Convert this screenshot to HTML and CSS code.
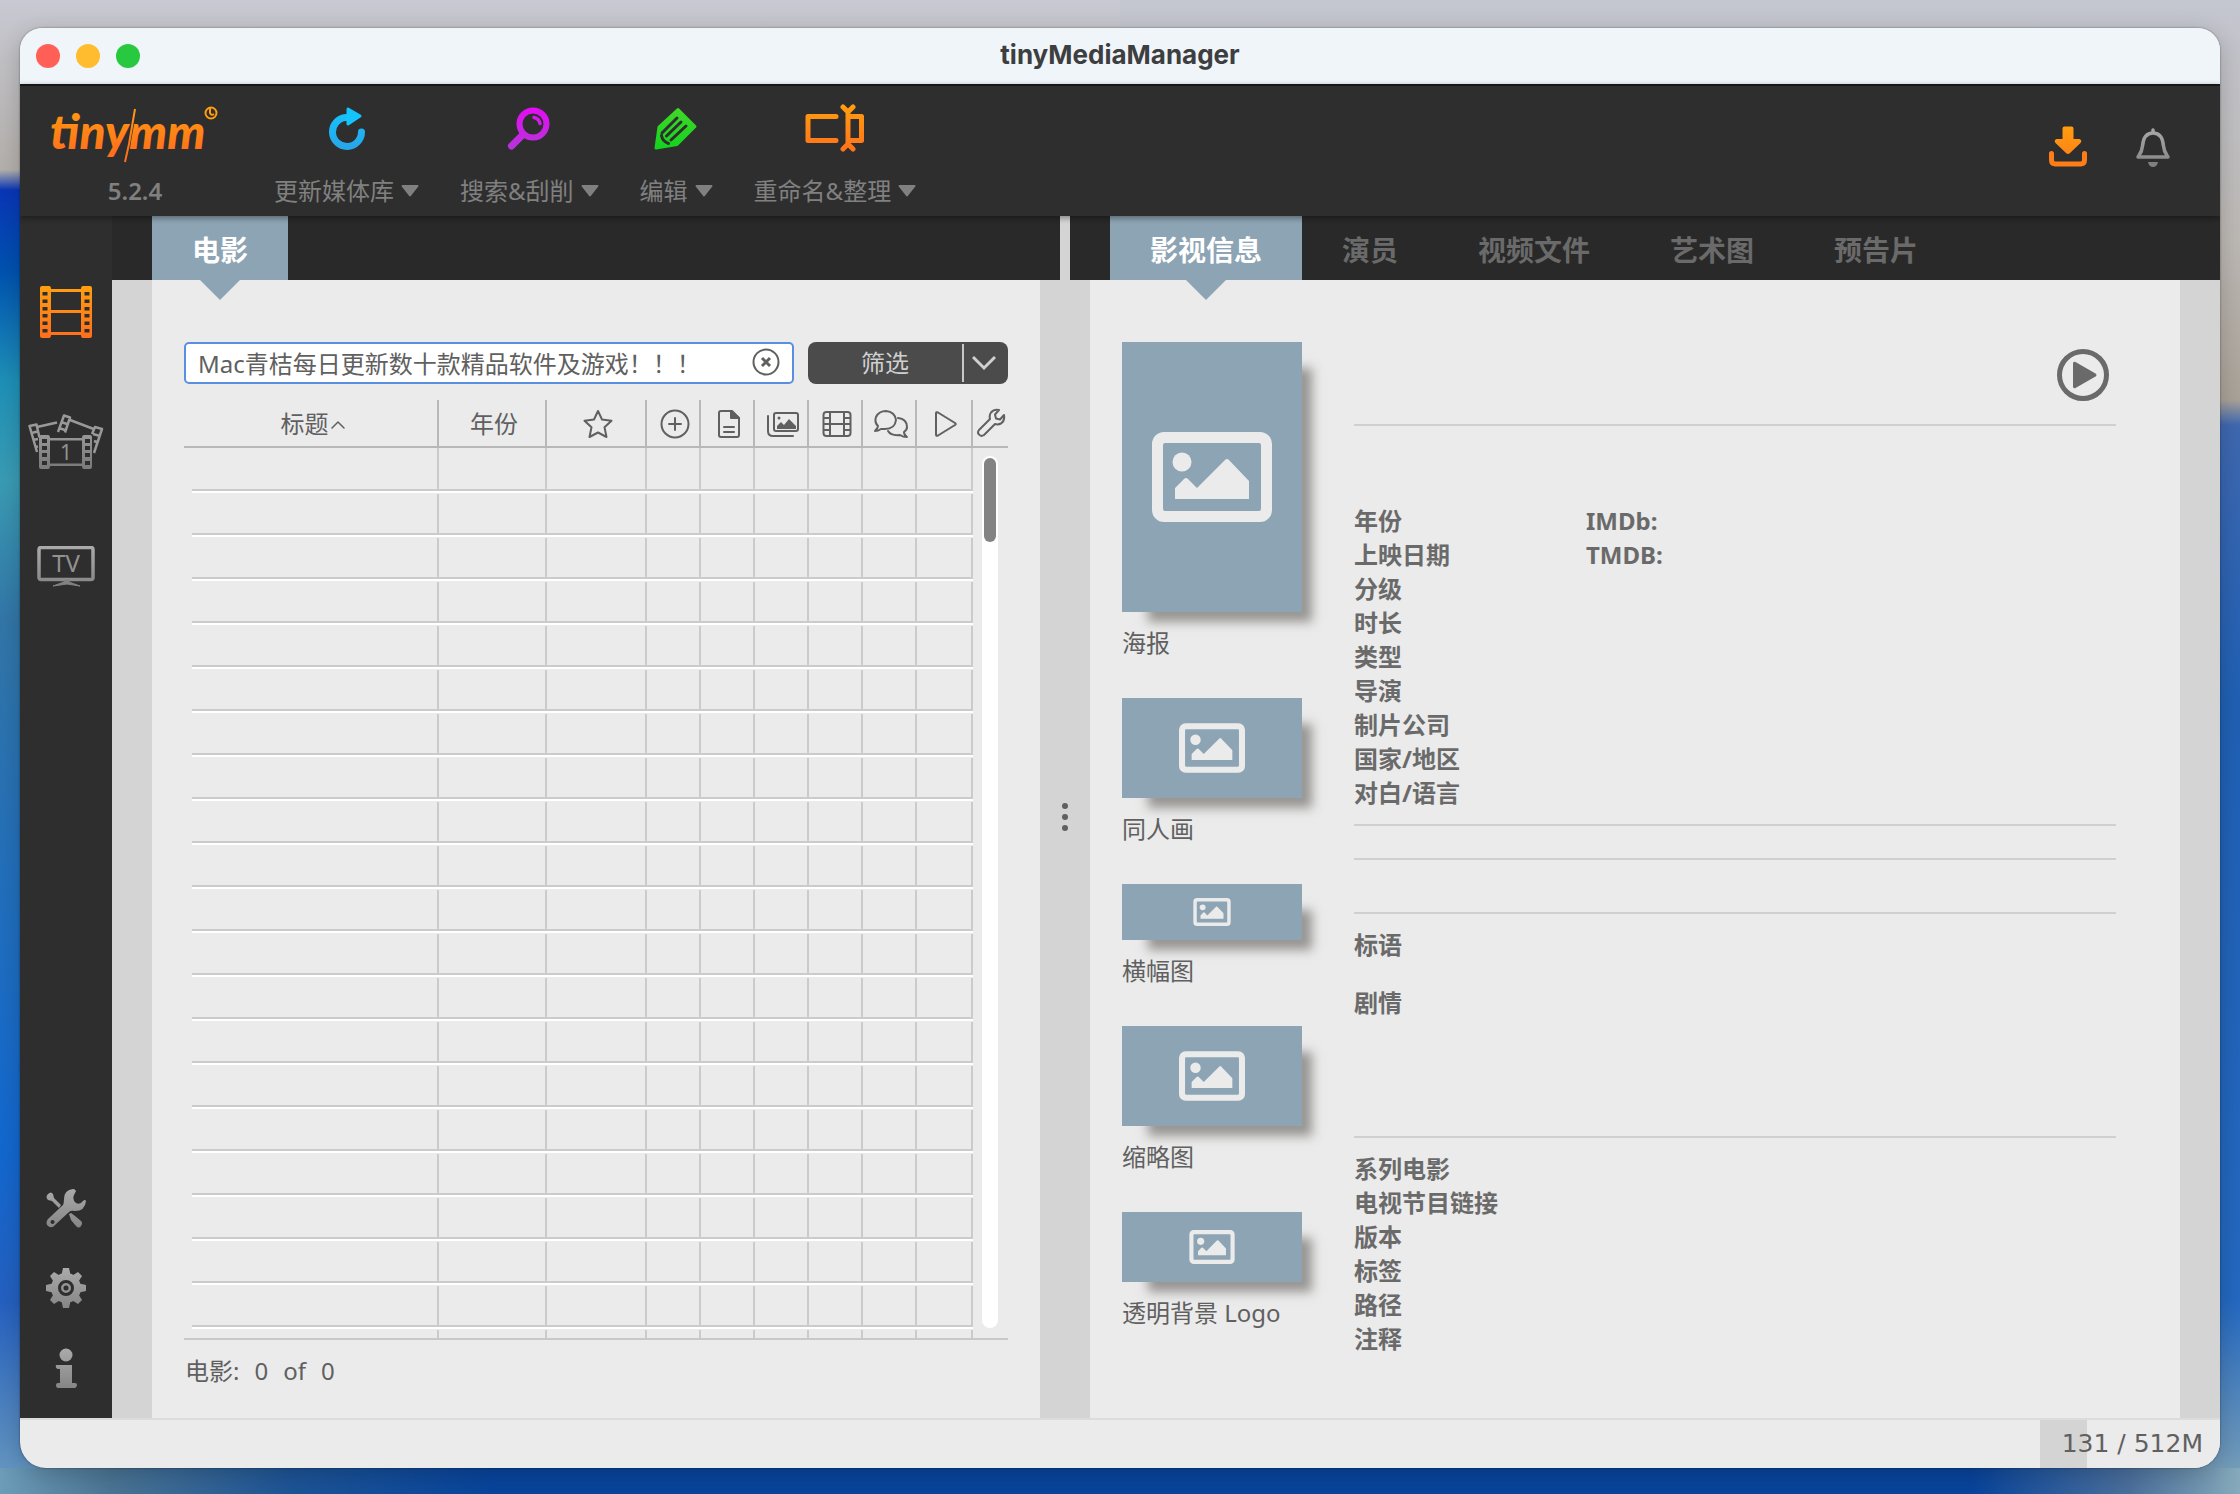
FILE: index.html
```html
<!DOCTYPE html>
<html lang="zh-CN">
<head>
  <meta charset="UTF-8" />
  <meta name="viewport" content="width=device-width, initial-scale=1.0"/>
  <title>tinyMediaManager</title>
  <link rel="stylesheet" href="styles.css">
</head>
<body>

  <!-- shared gradients and symbols -->
  <svg class="defs" width="0" height="0" aria-hidden="true">
    <defs>
      <linearGradient id="orange" gradientUnits="userSpaceOnUse" x1="0" y1="0" x2="0" y2="50"><stop offset="0" stop-color="#ff9f0f"/><stop offset="1" stop-color="#ff6f1c"/></linearGradient>
      <linearGradient id="blue" gradientUnits="userSpaceOnUse" x1="0" y1="0" x2="0" y2="44"><stop offset="0" stop-color="#12c8ff"/><stop offset="1" stop-color="#28a4e8"/></linearGradient>
      <linearGradient id="purple" gradientUnits="userSpaceOnUse" x1="0" y1="0" x2="0" y2="44"><stop offset="0" stop-color="#e60af5"/><stop offset="1" stop-color="#b436d8"/></linearGradient>
      <linearGradient id="green" gradientUnits="userSpaceOnUse" x1="0" y1="0" x2="0" y2="44"><stop offset="0" stop-color="#46d62c"/><stop offset="1" stop-color="#10d41c"/></linearGradient>
      <linearGradient id="grey" gradientUnits="userSpaceOnUse" x1="0" y1="0" x2="0" y2="50"><stop offset="0" stop-color="#ababab"/><stop offset="1" stop-color="#7c7c7c"/></linearGradient>
    </defs>
    <symbol id="caret" viewBox="0 0 18 12"><path d="M1.5 1h15L9 10.500z" fill="#808080" stroke="#808080" stroke-width="2" stroke-linejoin="round"/></symbol>
    <symbol id="picture" viewBox="0 0 120 90">
      <path fill="#ebebeb" fill-rule="evenodd" d="M12 0h96a12 12 0 0 1 12 12v66a12 12 0 0 1-12 12H12A12 12 0 0 1 0 78V12A12 12 0 0 1 12 0zM13 11a2 2 0 0 0-2 2v64a2 2 0 0 0 2 2h94a2 2 0 0 0 2-2V13a2 2 0 0 0-2-2z"/>
      <circle cx="30" cy="30" r="9.500" fill="#ebebeb"/>
      <path fill="#ebebeb" d="M23 67V56l9-9q2-2 4 0l9 9 28-28q2-2 4 0l20 21v18z"/>
    </symbol>
  </svg>

  <div class="window">
    <div class="titlebar">
      <div class="lights">
        <button class="light red" aria-label="关闭"></button>
        <button class="light yellow" aria-label="最小化"></button>
        <button class="light green" aria-label="缩放"></button>
      </div>
      <h1>tinyMediaManager</h1>
    </div>

    <header class="toolbar">
      <div class="brand">
        <svg width="174" height="68" viewBox="-2 -8 174 68">
          <text class="logo-text" x="0" y="45" fill="url(#orange)">tiny</text>
          <text class="logo-text" x="79" y="45" fill="url(#orange)">mm</text>
          <path d="M85 5L75 58" stroke="#2e2e2e" stroke-width="4"/>
          <path d="M85 5L79 40L75 58" stroke="url(#orange)" stroke-width="2" fill="none"/>
          <circle cx="161" cy="9" r="5.500" fill="none" stroke="#ff9f0f" stroke-width="2"/>
          <path d="M160 4v5q1 3 4 1" fill="none" stroke="#ff9f0f" stroke-width="2"/>
        </svg>
        <span>5.2.4</span>
      </div>

      <nav class="actions">
        <button class="action">
          <svg width="40" height="44" viewBox="0 0 40 44"><path d="M19 11.500A14.500 14.500 0 1 0 34.500 26" fill="none" stroke="url(#blue)" stroke-width="7" stroke-linecap="round"/><path d="M21 3l12 7-12 8z" fill="#14c4fd" stroke="#14c4fd" stroke-width="3" stroke-linejoin="round"/></svg>
          <span>更新媒体库<svg width="18" height="12"><use href="#caret"/></svg></span>
        </button>
        <button class="action">
          <svg width="44" height="44" viewBox="0 0 44 44" fill="none" stroke="url(#purple)" stroke-linecap="round"><circle cx="26" cy="18" r="13.500" stroke-width="6"/><path d="M15 29.500L4.500 40" stroke-width="7"/><path d="M27 11.500q5 1 6 6" stroke-width="3.500"/></svg>
          <span>搜索&amp;刮削<svg width="18" height="12"><use href="#caret"/></svg></span>
        </button>
        <button class="action">
          <svg width="44" height="44" viewBox="0 0 44 44" stroke-linejoin="round" stroke-linecap="round"><path d="M2 42L5 21 24 3.500 41 20.500 23 38.500z" fill="url(#green)" stroke="url(#green)" stroke-width="3"/><path d="M8 27L23 12M12.500 30L27 16M17 34L32 20" fill="none" stroke="#2e2e2e" stroke-width="3"/><path d="M7.500 29.500q1 6 7 8" fill="none" stroke="#2e2e2e" stroke-width="3"/></svg>
          <span>编辑<svg width="18" height="12"><use href="#caret"/></svg></span>
        </button>
        <button class="action">
          <svg width="60" height="48" viewBox="0 0 60 48" fill="none" stroke="url(#orange)" stroke-width="5" stroke-linecap="round" stroke-linejoin="round"><path d="M31 12.500H3V36.500H31"/><path d="M43 8V40M38 3l5 5 5-5M38 45l5-5 5 5M45 12.500H56.500V36.500H45"/></svg>
          <span>重命名&amp;整理<svg width="18" height="12"><use href="#caret"/></svg></span>
        </button>
      </nav>

      <div class="tools">
        <button aria-label="下载更新"><svg width="40" height="42" viewBox="0 0 40 42"><path d="M14.500 2.500q0-2 2-2h7q2 0 2 2V13h6q3 1 1 4L22 27q-2 2-4 0L7.500 17q-2-3 1-4h6z" fill="url(#orange)"/><path d="M3.500 27.500V34q0 4 4 4h25q4 0 4-4V27.500" fill="none" stroke="#fd7e18" stroke-width="5" stroke-linecap="round"/></svg></button>
        <button aria-label="消息"><svg width="40" height="42" viewBox="0 0 40 42"><path d="M20 7C12 7 10 14 9.500 20S7 28 5 31h30c-2-3-4-5-4.500-11S28 7 20 7zM20 6V4" fill="none" stroke="url(#grey)" stroke-width="3.500" stroke-linecap="round" stroke-linejoin="round"/><path d="M15 36h10q-1 5-5 5t-5-5z" fill="#808080"/></svg></button>
      </div>
    </header>

    <div class="main">
      <aside class="sidebar">
        <button aria-label="电影">
          <svg width="52" height="52" viewBox="0 0 52 52"><path fill="url(#orange)" fill-rule="evenodd" d="M2 0h7q2 0 2 3H41q0-3 2-3h7q2 0 2 2v48q0 2-2 2h-7q-2 0-2-3H11q0 3-2 3H2q-2 0-2-2V2q0-2 2-2zM11 6V24H41V6zM11 27V46H41V27zM2.500 6v3.500h5V6zM2.500 13.500V17h5v-3.500zM2.500 21v3.500h5V21zM2.500 28v3.500h5V28zM2.500 35.500V39h5v-3.500zM2.500 43v3.500h5V43zM44.500 6v3.500h5V6zM44.500 13.500V17h5v-3.500zM44.500 21v3.500h5V21zM44.500 28v3.500h5V28zM44.500 35.500V39h5v-3.500zM44.500 43v3.500h5V43z"/></svg>
        </button>
        <button aria-label="电影集">
          <svg width="76" height="56" viewBox="0 0 76 56">
            <path fill="url(#grey)" fill-rule="evenodd" d="M13 21h7q2 0 2 3H54q0-3 2-3h6q2 0 2 2v30q0 2-2 2h-6q-2 0-2-3H22q0 3-2 3h-7q-2 0-2-2V23q0-2 2-2zM22 26.500V49.500H54V26.500zM14 25v4h5v-4zM14 32v4h5v-4zM14 39v4h5v-4zM14 47v4h5v-4zM57 25v4h5v-4zM57 32v4h5v-4zM57 39v4h5v-4zM57 47v4h5v-4z"/>
            <path fill="none" stroke="#999" stroke-width="2.500" stroke-linejoin="round" d="M9 38L1.500 12l7-1.500 3 13M3.500 19l6-1.500M5 26l5-1M7 33l3-.5M9 13L29 8.500M30 18L36 1.500l6 2-5 15M33 8l6 2M31 14l6 2M42 6L67 15.500M66 39l8-24-7-2-3 7M65 20l7 2M66 27l4 1.500"/>
            <text class="icon-text" x="38" y="46" font-size="21">1</text>
          </svg>
        </button>
        <button aria-label="电视剧">
          <svg width="58" height="42" viewBox="0 0 58 42"><rect x="2" y="1.500" width="54" height="32" rx="2" fill="none" stroke="url(#grey)" stroke-width="3.500"/><path d="M27 34h5v2l11 4-13-2-14 2 11-4z" fill="#828282" stroke="#828282"/><text class="icon-text" x="29" y="26" font-size="24">TV</text></svg>
        </button>

        <div class="sidebar-bottom">
          <button aria-label="工具">
            <svg width="40" height="40" viewBox="0 0 40 40"><path fill="url(#grey)" fill-rule="evenodd" d="M27 1Q18 2 18 11q0 4-1 6L2 31Q-1 35 2 38q4 3 7-1L23 24q2-2 6-1 10 0 11-10-1-2-3 0-3 4-7 2-4-3-2-8l2-4q-1-2-3-2zM6.500 32a2 2 0 1 0 .1 0z"/><path fill="url(#grey)" d="M2 6Q-1 9 2 12l4 1 7 7 2-3-7-7-1-4Q5 3 2 6zM23 26l2 6 5 6q3 3 5 0t0-5l-6-5-4-3z"/></svg>
          </button>
          <button aria-label="设置">
            <svg width="40" height="40" viewBox="0 0 40 40"><g fill="url(#grey)"><circle cx="20" cy="20" r="15"/><path d="M17 0h6l2 9h-10zM17 40h6l2-9h-10zM0 17v6l9 2v-10zM40 17v6l-9 2v-10z"/><path d="M4 8l4-4 8 5-7 7zM32 4l4 4-5 8-7-7zM4 32l4 4 8-5-7-7zM32 36l4-4-5-8-7 7z"/></g><circle cx="20" cy="20" r="6.500" fill="#929292" stroke="#2e2e2e" stroke-width="3"/><circle cx="20" cy="20" r="2.500" fill="#2e2e2e"/></svg>
          </button>
          <button aria-label="关于">
            <svg width="40" height="40" viewBox="0 0 40 40" fill="url(#grey)"><circle cx="20" cy="7" r="6.500"/><path d="M10 17h16v18h3q2 0 2 2t-2 3H12q-2 0-2-3 0-2 2-2h2V21h-2q-3-1-2-4z"/></svg>
          </button>
        </div>
      </aside>

      <section class="pane pane-list">
        <div class="tabs" role="tablist">
          <button class="tab active" role="tab" aria-selected="true">电影</button>
        </div>
        <div class="panel">
          <div class="search-row">
            <div class="search">
              <input type="text" aria-label="搜索" value="Mac青桔每日更新数十款精品软件及游戏！！！">
              <button class="clear" aria-label="清除"><svg width="28" height="28" viewBox="0 0 28 28" fill="none" stroke="#606060" stroke-width="2"><circle cx="14" cy="14" r="12.500"/><path d="M10 10l8 8M18 10l-8 8" stroke-width="3"/></svg></button>
            </div>
            <div class="filter">
              <button class="filter-main">筛选</button>
              <button class="filter-more" aria-label="更多筛选"><svg width="24" height="16" viewBox="0 0 24 16" fill="none" stroke="#d0d0d0" stroke-width="3"><path d="M1 2l11 11L23 2"/></svg></button>
            </div>
          </div>

          <div class="table-wrap">
            <table>
              <colgroup>
                <col><col class="c-year"><col class="c-rating"><col class="c-icon"><col class="c-icon"><col class="c-icon"><col class="c-icon"><col class="c-icon"><col class="c-play"><col class="c-config">
              </colgroup>
              <thead>
                <tr>
                  <th>标题<svg width="14" height="10" viewBox="0 0 14 10" class="sort"><path d="M1 8l6-6 6 6" stroke-width="1.500"/></svg></th>
                  <th>年份</th>
                  <th><svg width="30" height="30" viewBox="0 0 30 30"><path d="M15 2l4 8.500 9.500 1.300-7 6.500L23.500 28 15 23.500 6.500 28l2-9.700-7-6.500L11 10.500z"/></svg></th>
                  <th><svg width="30" height="30" viewBox="0 0 30 30"><circle cx="15" cy="15" r="13.500"/><path d="M15 9v12M9 15h12"/></svg></th>
                  <th><svg width="24" height="30" viewBox="0 0 24 30"><path d="M2 4q0-2 2-2h11l7 7v17q0 2-2 2H4q-2 0-2-2zM7 18h10M7 23h10"/><path d="M14 2v7h8z" fill="#606060"/></svg></th>
                  <th><svg width="34" height="30" viewBox="0 0 34 30"><rect x="8" y="4" width="24" height="18" rx="2"/><path d="M2 7v15q0 5 5 5h20"/><circle cx="13" cy="9" r="1.500" fill="#606060" stroke="none"/><path d="M11 20v-3l4-4 3 3 5-6 7 7v3z" fill="#606060" stroke="none"/></svg></th>
                  <th><svg width="30" height="30" viewBox="0 0 30 30"><rect x="1.500" y="3" width="27" height="24" rx="3"/><path d="M8 3v24M22 3v24M8 15h14M2 9h6M2 15h6M2 21h6M22 9h6M22 15h6M22 21h6"/></svg></th>
                  <th><svg width="38" height="30" viewBox="0 0 38 30"><path d="M3 22q3-3 3-5-4-4-2-9 3-6 10-6 9 1 10 9-1 9-11 9h-4q-3 2-6 2z"/><path d="M26 9q9 1 9 9 0 3-3 5 0 3 3 5-4 0-7-2-9 1-12-4"/></svg></th>
                  <th><svg width="26" height="30" viewBox="0 0 26 30"><path d="M3 4.500q0-2 2-1l17 10.500q1.500 1 0 2L5 26.500q-2 1-2-1z"/></svg></th>
                  <th><button class="config" aria-label="列设置"><svg width="30" height="30" viewBox="0 0 30 30"><path d="M23 2l-4 4.500 1 4 4 1L28 7q1 6-3 8.500-3 1.500-6 .5L8 27q-3 2-5-.5-2-2 0-4.500L14 11q-1-4 1-6.500Q18 1 23 2z"/></svg></button></th>
                </tr>
              </thead>
              <tbody id="movieRows"></tbody>
            </table>
            <div class="scrollbar"><div class="thumb"></div></div>
          </div>

          <div class="count"><span>电影:</span><span>0</span><span>of</span><span>0</span></div>
        </div>
      </section>

      <div class="divider"><i></i><i></i><i></i></div>

      <section class="pane pane-info">
        <div class="tabs" role="tablist">
          <button class="tab active" role="tab" aria-selected="true">影视信息</button>
          <button class="tab" role="tab">演员</button>
          <button class="tab" role="tab">视频文件</button>
          <button class="tab" role="tab">艺术图</button>
          <button class="tab" role="tab">预告片</button>
        </div>
        <div class="panel info">
          <div class="artwork">
            <figure><div class="art poster"><svg width="120" height="90"><use href="#picture"/></svg></div><figcaption>海报</figcaption></figure>
            <figure><div class="art fanart"><svg width="66" height="50"><use href="#picture"/></svg></div><figcaption>同人画</figcaption></figure>
            <figure><div class="art banner"><svg width="38" height="28"><use href="#picture"/></svg></div><figcaption>横幅图</figcaption></figure>
            <figure><div class="art fanart"><svg width="66" height="50"><use href="#picture"/></svg></div><figcaption>缩略图</figcaption></figure>
            <figure><div class="art clearlogo"><svg width="46" height="34"><use href="#picture"/></svg></div><figcaption>透明背景 Logo</figcaption></figure>
          </div>

          <div class="details">
            <div class="heading">
              <button aria-label="播放"><svg width="52" height="52" viewBox="0 0 52 52"><circle cx="26" cy="26" r="23.500" fill="none" stroke="#6a6a6a" stroke-width="5"/><path d="M16 14.500q0-2.500 2.500-1.500L38.500 24.500q2 1.500 0 3L18.500 39q-2.500 1-2.500-1.500z" fill="#6a6a6a"/></svg></button>
            </div>
            <div class="facts">
              <ul>
                <li>年份</li>
                <li>上映日期</li>
                <li>分级</li>
                <li>时长</li>
                <li>类型</li>
                <li>导演</li>
                <li>制片公司</li>
                <li>国家/地区</li>
                <li>对白/语言</li>
              </ul>
              <ul>
                <li>IMDb:</li>
                <li>TMDB:</li>
              </ul>
            </div>
            <div class="ratings"></div>
            <div class="badges"></div>
            <div class="texts">
              <h2>标语</h2>
              <h2>剧情</h2>
            </div>
            <ul class="extra">
              <li>系列电影</li>
              <li>电视节目链接</li>
              <li>版本</li>
              <li>标签</li>
              <li>路径</li>
              <li>注释</li>
            </ul>
          </div>
        </div>
      </section>
    </div>

    <footer class="statusbar">
      <div class="memory">131 / 512M</div>
    </footer>
  </div>

  <script>
    // Empty grid rows, the list has no movies yet
    const rows = document.getElementById("movieRows");
    for (let i = 0; i < 21; i++) {
      const tr = rows.insertRow();
      for (let c = 0; c < 10; c++) {
        tr.insertCell();
      }
    }
  </script>
</body>
</html>
```

FILE: styles.css
```css
* { box-sizing: border-box; margin: 0; padding: 0; }

body {
  height: 100vh;
  padding: 28px 20px 26px;
  overflow: hidden;
  font-family: 'Noto Sans', 'Noto Sans CJK SC', sans-serif;
  font-size: 24px;
  line-height: 34px;
  color: #606060;
  background:
    linear-gradient(90deg, #6c9cb8, #4a7494 5%, #1d5496 13%, #08449c 22%, #08449c 88%, #4a6f9c 95%, #86aabb) bottom / 100% 26px no-repeat,
    linear-gradient(#c8c9d2, #b4b0ac 170px, #0a36b8 190px, #0052b0 270px, #1e90b8 380px, #3a9cb4 480px, #3276a8 620px, #1268d0 1150px, #2460c0 1300px, #6c9cc0) left / 50% 100% no-repeat,
    linear-gradient(#c4c6d0, #bcb8b4 240px, #aaa298 400px, #3f68b0 425px, #2060b4 700px, #2468c0 1300px, #7fa4b8) right / 50% 100% no-repeat;
}

button {
  background: none;
  border: 0;
  font: inherit;
  color: inherit;
  cursor: pointer;
}

svg { display: block; }
ul { list-style: none; }
.defs { position: absolute; }

.window {
  display: flex;
  flex-direction: column;
  height: 100%;
  border-radius: 22px 22px 26px 26px;
  overflow: hidden;
  background: #ebebeb;
  box-shadow: 0 0 2px rgba(0,0,0,0.5), 0 6px 24px rgba(0,0,0,0.2);
}

/* title bar */
.titlebar {
  display: grid;
  grid-template-columns: 1fr auto 1fr;
  align-items: center;
  height: 56px;
  padding: 0 16px;
  background: #f0f5fa;
}

.lights { display: flex; gap: 16px; }

.light {
  width: 24px;
  height: 24px;
  border-radius: 50%;
}

.light.red { background: #ff5f57; }
.light.yellow { background: #febc2e; }
.light.green { background: #28c840; }

.titlebar h1 {
  padding-bottom: 2px;
  font-family: Inter, sans-serif;
  font-size: 26px;
  font-weight: 700;
  color: #3c3e40;
}

/* toolbar */
.toolbar {
  position: relative;
  z-index: 1;
  display: flex;
  height: 132px;
  padding: 10px 47px 0 28px;
  background: #2e2e2e;
  color: #808080;
  border-top: 2px solid #161618;
  box-shadow: 0 2px 6px rgba(0,0,0,0.4);
}

.brand {
  display: flex;
  flex-direction: column;
  align-items: center;
  gap: 10px;
  font-weight: 600;
}

.logo-text {
  font-family: Lato, sans-serif;
  font-size: 48px;
  font-weight: 900;
  font-style: italic;
}

.actions {
  display: flex;
  gap: 41px;
  margin-left: 52px;
  padding-top: 8px;
}

.action {
  display: grid;
  grid-template-rows: 48px 34px;
  gap: 22px;
  align-content: start;
  place-items: center;
}

.action span {
  display: flex;
  align-items: center;
  gap: 7px;
  line-height: 34px;
}

.tools {
  display: flex;
  align-items: flex-start;
  gap: 45px;
  margin-left: auto;
  padding-top: 30px;
}

/* main area */
.main {
  flex: 1;
  display: flex;
  min-height: 0;
}

.sidebar {
  display: flex;
  flex-direction: column;
  align-items: center;
  gap: 76px;
  width: 92px;
  padding: 70px 0 30px;
  background: #2e2e2e;
}

.sidebar-bottom {
  display: flex;
  flex-direction: column;
  gap: 40px;
  margin-top: auto;
}

.icon-text {
  fill: #929292;
  text-anchor: middle;
}

.pane {
  display: flex;
  flex-direction: column;
  min-width: 0;
  background: #d4d4d4;
}

.pane-list { flex: 474 1 0; }
.pane-info { flex: 575 1 0; }

.tabs {
  display: flex;
  height: 64px;
  padding-left: 40px;
  background: #292929;
}

.tab {
  position: relative;
  padding: 3px 40px 0;
  font-size: 28px;
  font-weight: 700;
  color: #6a6a6a;
}

.tab.active {
  background: #8da4b4;
  color: #fff;
}

.tab.active::after {
  content: "";
  position: absolute;
  top: 100%;
  left: 50%;
  margin-left: -20px;
  border: 20px solid transparent;
  border-top-color: #8da4b4;
  border-bottom: 0;
}

.panel {
  flex: 1;
  min-height: 0;
  padding: 62px 32px 0;
  background: #ebebeb;
}

.pane-list .panel {
  display: flex;
  flex-direction: column;
  margin: 0 20px 0 40px;
}

.pane-info .panel { margin: 0 40px 0 20px; }

.divider {
  display: flex;
  flex-direction: column;
  align-items: center;
  justify-content: center;
  gap: 5px;
  width: 10px;
  background: #d4d4d4;
}

.divider i {
  width: 6px;
  height: 6px;
  border-radius: 50%;
  background: #606060;
}

/* search */
.search-row {
  display: flex;
  gap: 14px;
  height: 42px;
}

.search {
  position: relative;
  flex: 1;
}

.search input {
  width: 100%;
  height: 42px;
  padding: 0 48px 2px 12px;
  border: 2px solid #5a8fe0;
  border-radius: 5px;
  background: #fff;
  font: inherit;
  color: #606060;
}

.clear {
  position: absolute;
  top: 6px;
  right: 14px;
}

.filter {
  display: flex;
  width: 200px;
  border-radius: 8px;
  background: #4b4b4b;
  color: #d0d0d0;
}

.filter-main { flex: 1; }

.filter-more {
  display: grid;
  place-items: center;
  width: 46px;
  margin: 2px 0;
  padding-right: 4px;
  border-left: 2px solid #c8c8c8;
}

/* movie table */
.table-wrap {
  position: relative;
  flex: 1;
  min-height: 0;
  margin-top: 16px;
  overflow: hidden;
  border-bottom: 2px solid #c8c8c8;
}

table {
  width: 100%;
  table-layout: fixed;
  border-collapse: separate;
  border-spacing: 0;
}

.c-year { width: 108px; }
.c-rating { width: 100px; }
.c-icon { width: 54px; }
.c-play { width: 56px; }
.c-config { width: 35px; }

th {
  height: 48px;
  padding: 2px 0 0 4px;
  border-right: 2px solid #b8b8b8;
  border-bottom: 2px solid #b8b8b8;
  font-weight: 400;
}

th:last-child {
  padding: 0;
  border-right: 0;
}

th svg {
  margin: 0 auto;
  fill: none;
  stroke: #606060;
  stroke-width: 2;
  stroke-linejoin: round;
  stroke-linecap: round;
}

th .sort {
  display: inline-block;
  margin: 0 0 3px 2px;
}

.config { display: block; margin: 0 auto; }

td {
  height: 44px;
  background:
    linear-gradient(#cbcbcb 0 0) bottom / 100% 2px no-repeat,
    linear-gradient(#fff 0 0) top / 100% 2px no-repeat,
    linear-gradient(#cbcbcb 0 0) right bottom / 2px 41px no-repeat;
}

tr:first-child td {
  height: 43px;
  background:
    linear-gradient(#cbcbcb 0 0) bottom / 100% 2px no-repeat,
    linear-gradient(#cbcbcb 0 0) right bottom / 2px 100% no-repeat;
}

tbody td:first-child {
  background-origin: content-box;
  padding-left: 8px;
}

tbody td:last-child { background: none; }

.scrollbar {
  position: absolute;
  top: 56px;
  right: 10px;
  bottom: 10px;
  width: 16px;
  padding: 2px;
  border-radius: 8px;
  background: #fff;
}

.thumb {
  height: 84px;
  border-radius: 6px;
  background: #838383;
}

.count {
  display: flex;
  gap: 15px;
  height: 78px;
  padding: 14px 1px 0;
}

/* movie details */
.info {
  display: flex;
  gap: 52px;
}

.artwork { width: 180px; }

figure { margin-bottom: 38px; }
figcaption { margin-top: 14px; white-space: nowrap; }

.art {
  display: grid;
  place-items: center;
  background: #8da4b4;
  box-shadow: 18px 18px 10px -8px rgba(70,66,60,0.5);
}

.poster { height: 270px; }
.fanart { height: 100px; }
.banner { height: 56px; }
.clearlogo { height: 70px; }

.details {
  flex: 1;
  margin-right: 32px;
  font-weight: 700;
  color: #6a6a6a;
}

.heading,
.facts,
.ratings,
.badges,
.texts { border-bottom: 2px solid #cfcfcf; }

.heading {
  display: flex;
  justify-content: flex-end;
  height: 84px;
  padding: 7px;
}

.heading button { height: 52px; }

.facts {
  display: grid;
  grid-template-columns: 232px 1fr;
  height: 400px;
  padding-top: 78px;
}

.ratings { height: 34px; }
.badges { height: 54px; }

.texts {
  display: flex;
  flex-direction: column;
  gap: 24px;
  height: 224px;
  padding-top: 14px;
}

.texts h2 { font-size: 24px; }

.extra { padding-top: 14px; }

/* status bar */
.statusbar {
  display: flex;
  justify-content: flex-end;
  height: 50px;
  border-top: 2px solid #dcdcdc;
}

.memory {
  width: 180px;
  padding: 7px 17px;
  font-family: 'DejaVu Sans', sans-serif;
  font-size: 25px;
  text-align: right;
  background: linear-gradient(90deg, #d4d4d4 26%, #ebebeb 26%);
}
```
